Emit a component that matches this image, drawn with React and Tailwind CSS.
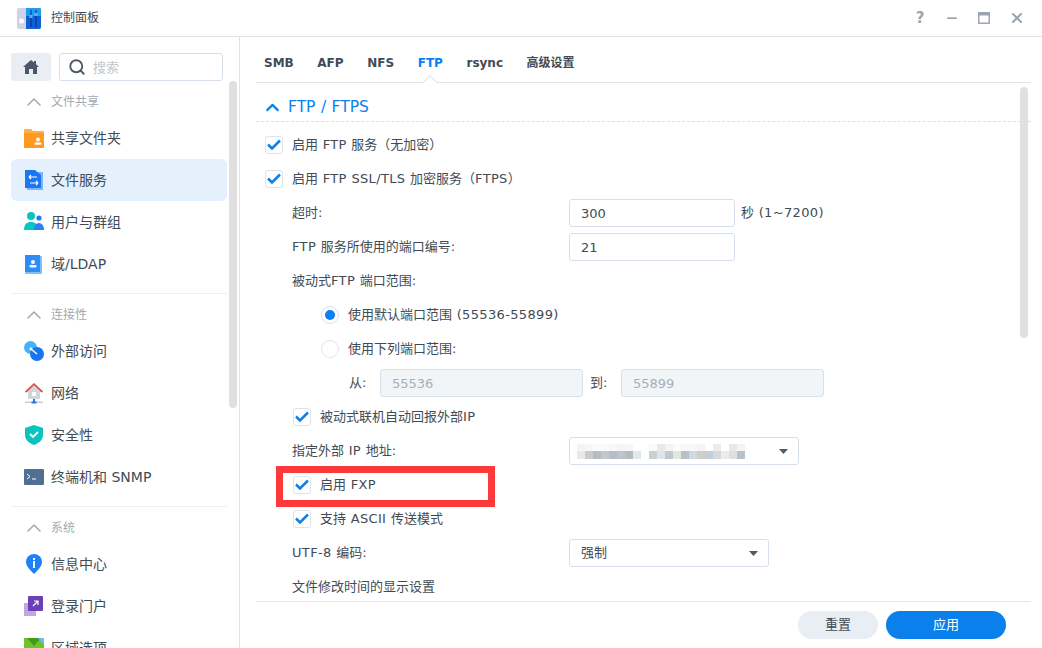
import React from "react";
import { ChevronUp, Search, X, Minus } from "lucide-react";

const HomeIcon = () => (
  <svg width="16" height="14" viewBox="0 0 16 14">
    <path d="M8 0l3 2.600V1h2v3.300L16 7h-2v7h-4V9H6v5H2V7H0z" fill="#4b5766" />
  </svg>
);

const FolderIcon = () => (
  <svg width="20" height="19" viewBox="0 0 20 19">
    <path d="M0 1a1 1 0 0 1 1-1h6l2 2h10a1 1 0 0 1 1 1v15a1 1 0 0 1-1 1H1a1 1 0 0 1-1-1z" fill="#fbb04a" />
    <path d="M0 4h20v14a1 1 0 0 1-1 1H1a1 1 0 0 1-1-1z" fill="#ff9a1f" />
    <circle cx="14" cy="10.500" r="2" fill="#fff" />
    <rect x="10.500" y="13.500" width="7" height="2.200" rx="1" fill="#fff" />
  </svg>
);

const FileServiceIcon = () => (
  <svg width="18" height="20" viewBox="0 0 18 20">
    <rect x="2" y="2" width="16" height="18" fill="#7db4ff" />
    <path d="M0 0h10l6 5v13H0z" fill="#1b76f2" />
    <path d="M4 7h8M4 7l2-2M4 7l2 2M13 13H5M13 13l-2-2M13 13l-2 2" stroke="#fff" strokeWidth="1.200" fill="none" />
  </svg>
);

const UsersIcon = () => (
  <svg width="20" height="20" viewBox="0 0 20 20">
    <circle cx="7" cy="4" r="4" fill="#07c4c4" />
    <path d="M0 18c0-6 3-8 7-8s7 2 7 8z" fill="#07c8c0" />
    <circle cx="15" cy="6" r="2.600" fill="#1f7cf5" />
    <path d="M10 18c0-4 2-7 5-7s5 3 5 7z" fill="#2a80f6" />
  </svg>
);

const DomainIcon = () => (
  <svg width="18" height="19" viewBox="0 0 18 19">
    <rect x="0" y="1" width="17" height="18" rx="1" fill="#7cc0fb" />
    <rect x="0" y="0" width="15" height="17" fill="#2d8df5" />
    <circle cx="8" cy="7" r="2" fill="#fff" />
    <rect x="4.500" y="10" width="7" height="2.400" rx="1" fill="#fff" />
  </svg>
);

const ExternalIcon = () => (
  <svg width="20" height="20" viewBox="0 0 20 20">
    <circle cx="6.500" cy="6.500" r="6.500" fill="#47b2fb" />
    <circle cx="13" cy="13" r="7" fill="#1c73ee" />
    <path d="M7 8l6 5" stroke="#fff" strokeWidth="1.400" />
    <circle cx="7" cy="8" r="1.400" fill="#fff" />
  </svg>
);

const NetworkIcon = () => (
  <svg width="18" height="21" viewBox="0 0 18 21">
    <path d="M9 1l8 8h-2v7H3V9H1z" fill="#d2d6db" />
    <path d="M0.500 9L9 1.200 17.500 9" fill="none" stroke="#d9534f" strokeWidth="1.800" />
    <rect x="7" y="9" width="4" height="4" fill="#fff" />
    <rect x="0" y="18.500" width="18" height="1.500" fill="#c9ced4" />
    <rect x="8" y="16" width="2" height="3" fill="#1f7cf5" />
    <rect x="6.500" y="18.500" width="5" height="2" fill="#1f7cf5" />
  </svg>
);

const ShieldIcon = () => (
  <svg width="18" height="20" viewBox="0 0 18 20">
    <path d="M9 0l9 3v7c0 5-4 8-9 10-5-2-9-5-9-10V3z" fill="#09c3bf" />
    <path d="M5 9l3 3 5-5" stroke="#fff" strokeWidth="1.800" fill="none" />
  </svg>
);

const TerminalIcon = () => (
  <svg width="20" height="16" viewBox="0 0 20 16">
    <rect width="20" height="16" rx="1" fill="#4f7093" />
    <path d="M3 5l3 2.500-3 2.500" stroke="#fff" strokeWidth="1" fill="none" />
    <path d="M8 10h4" stroke="#fff" strokeWidth="1" />
  </svg>
);

const InfoIcon = () => (
  <svg width="16" height="20" viewBox="0 0 16 20">
    <path d="M8 0a8 8 0 0 1 8 8c0 4-4 8-8 12-4-4-8-8-8-12a8 8 0 0 1 8-8z" fill="#1f80f8" />
    <rect x="7" y="7" width="2" height="7" fill="#fff" />
    <rect x="7" y="4" width="2" height="2" fill="#fff" />
  </svg>
);

const PortalIcon = () => (
  <svg width="20" height="20" viewBox="0 0 20 20">
    <rect x="0" y="7" width="12" height="13" fill="#c3a4ea" />
    <rect x="4" y="0" width="15" height="15" rx="1" fill="#6b3fb5" />
    <path d="M9 10l5-5M10 5h4v4" stroke="#fff" strokeWidth="1.200" fill="none" />
  </svg>
);

const RegionIcon = () => (
  <svg width="20" height="20" viewBox="0 0 20 20">
    <rect width="20" height="20" fill="#72c02c" />
    <path d="M10 8L3 0h14z" fill="#3f9a1e" />
    <path d="M14 0h6v7z" fill="#65c0f0" />
  </svg>
);

const sections = [
  {
    title: "文件共享",
    items: [
      { label: "共享文件夹", icon: <FolderIcon /> },
      { label: "文件服务", icon: <FileServiceIcon />, active: true },
      { label: "用户与群组", icon: <UsersIcon /> },
      { label: "域/LDAP", icon: <DomainIcon /> },
    ],
  },
  {
    title: "连接性",
    items: [
      { label: "外部访问", icon: <ExternalIcon /> },
      { label: "网络", icon: <NetworkIcon /> },
      { label: "安全性", icon: <ShieldIcon /> },
      { label: "终端机和 SNMP", icon: <TerminalIcon /> },
    ],
  },
  {
    title: "系统",
    items: [
      { label: "信息中心", icon: <InfoIcon /> },
      { label: "登录门户", icon: <PortalIcon /> },
      { label: "区域选项", icon: <RegionIcon /> },
    ],
  },
];

const tabs = ["SMB", "AFP", "NFS", "FTP", "rsync", "高级设置"];

// the blurred-out IP in the reference, two rows of mosaic cells
const blurTop = [
  "bg-[#f4f4f4]", "bg-[#f6f6f6]", "bg-[#fafafa]", "bg-[#fafafa]", "bg-[#f8f8fa]", "bg-[#f4f4f4]", "bg-[#f6f6f6]", "bg-white", "bg-white",
  "bg-[#fafafa]", "bg-[#e8e8ec]", "bg-[#f4f4f4]", "bg-[#fcfcfc]", "bg-[#f8f8f8]", "bg-[#f8f8f8]", "bg-[#f4f4f4]", "bg-white", "bg-[#ececec]", "bg-white", "bg-[#e8e8e8]", "bg-[#f4f4f4]",
];
const blurBottom = [
  "bg-[#e8e8e8]", "bg-[#c8ccd0]", "bg-[#b8bcc0]", "bg-[#c4c8c8]", "bg-[#b8bcc8]", "bg-[#c0c4c8]", "bg-[#b4bcc0]", "bg-[#e4e6e8]", "bg-white",
  "bg-[#c8d0d0]", "bg-[#e0e4e8]", "bg-[#c0c8d0]", "bg-[#e4e4e0]", "bg-[#b8c0c8]", "bg-[#d0d8e0]", "bg-[#cfcfc8]", "bg-[#c4d0d8]", "bg-[#d8d8d8]", "bg-[#e8ecf0]", "bg-[#e0e0e0]", "bg-[#b8c0c8]",
];

// latin runs sit a little wider than the CJK around them
const Txt = ({ children }) => (
  <span>
    {children.split(/([A-Za-z0-9/~().:-]+)/).map((part, i) =>
      i % 2 === 1 ? (
        <span key={i} className="tracking-[0.35px]">{part}</span>
      ) : (
        part
      )
    )}
  </span>
);

const Check = () => (
  <span className="flex h-[18px] w-[18px] shrink-0 items-center justify-center rounded-[3px] border border-[#dce5ee] bg-white">
    <svg width="14" height="12" viewBox="0 0 14 12">
      <path d="M1 5.500l4 4L13 1.500" stroke="#0a7ff0" strokeWidth="2.500" fill="none" />
    </svg>
  </span>
);

const Radio = ({ on }) => (
  <span className={`flex h-[18px] w-[18px] items-center justify-center rounded-full border ${on ? "border-[#cfe3f8]" : "border-[#dfe6ee]"}`}>
    {on && <span className="h-[10px] w-[10px] rounded-full bg-[#0a7ff0]" />}
  </span>
);

const Caret = () => (
  <svg width="9" height="5" viewBox="0 0 9 5" className="shrink-0">
    <path d="M0 0h9L4.500 5z" fill="#4d5a68" />
  </svg>
);

const Row = ({ children, className = "" }) => (
  <div className={`flex h-[34px] items-center ${className}`}>{children}</div>
);

const CheckRow = ({ label, indent }) => (
  <Row className={indent ? "pl-[37px]" : "pl-[9px]"}>
    <Check />
    <span className="ml-[9px]"><Txt>{label}</Txt></span>
  </Row>
);

const FieldRow = ({ label, children }) => (
  <Row className="pl-[36px]">
    <span className="w-[277px] shrink-0"><Txt>{label}</Txt></span>
    {children}
  </Row>
);

const TextBox = ({ value, className = "" }) => (
  <div className={`flex h-[28px] items-center rounded-[3px] border border-[#d7e0ea] px-[11px] pt-[1px] ${className}`}>{value}</div>
);

export default function App() {
  return (
    <div className="flex h-[648px] w-[1042px] flex-col overflow-hidden bg-white text-[13px] text-[#414b55] [font-family:'DejaVu_Sans','Noto_Sans_CJK_SC',sans-serif]">
      <div className="flex h-[37px] shrink-0 items-center border-b border-[#dde4ec] pl-[17px] pr-[17px]">
        <svg width="24" height="23" viewBox="0 0 24 23">
          <rect x="0" y="1" width="24" height="21" rx="2" fill="#cfd3e6" />
          <path d="M9 1h13a2 2 0 0 1 2 2v17a2 2 0 0 1-2 2H9z" fill="#0f5fd8" />
          <path d="M9 1h13a2 2 0 0 1 2 2v6H9z" fill="#1d9cf0" />
          <path d="M14 3v17M19 3v17" stroke="#0b2f78" strokeWidth="1" />
          <rect x="12.500" y="8" width="3" height="3" fill="#5cb4f5" />
          <rect x="17.500" y="6" width="3" height="3" fill="#5cb4f5" />
          <circle cx="4.500" cy="14" r="2.500" fill="#fff" />
        </svg>
        <span className="ml-[10px] text-[12px]">控制面板</span>
        <div className="ml-auto flex items-center gap-[18px] text-[#9aa5b1]">
          <span className="w-[14px] text-center text-[15px] font-bold leading-none">?</span>
          <Minus size={14} strokeWidth={3} />
          <svg width="14" height="12" viewBox="0 0 14 12">
            <rect x="1.750" y="0.750" width="10.500" height="10.500" fill="none" stroke="currentColor" strokeWidth="1.500" />
            <rect x="1" y="0" width="12" height="3.500" fill="currentColor" />
          </svg>
          <X size={16} strokeWidth={3} />
        </div>
      </div>

      <div className="flex min-h-0 flex-1">
        <aside className="relative w-[240px] shrink-0 overflow-hidden border-r border-[#dde4ec]">
          <div className="flex items-center gap-[8px] pl-[11px] pt-[16px]">
            <div className="flex h-[28px] w-[40px] items-center justify-center rounded-[3px] bg-[#e9eef4]">
              <HomeIcon />
            </div>
            <div className="flex h-[28px] w-[164px] items-center rounded-[3px] border border-[#d7e0ea] pl-[8px]">
              <Search size={18} strokeWidth={2.5} className="text-[#4d5a68]" />
              <span className="ml-[7px] pt-[1px] text-[#c2c7cd]">搜索</span>
            </div>
          </div>
          {sections.map((s, i) => (
            <div key={s.title} className={i > 0 ? "mx-[11px] mt-[8px] w-[216px] border-t border-[#eceef2]" : "mx-[11px] w-[216px]"}>
              <div className={`flex h-[36px] items-center pl-[11px] text-[12px] text-[#a3a9b0] ${i > 0 ? "pt-[5px]" : "pt-[6px]"}`}>
                <ChevronUp size={24} strokeWidth={1.500} className="text-[#a3a9b0]" />
                <span className="ml-[5px]">{s.title}</span>
              </div>
              {s.items.map((item) => (
                <div key={item.label} className={`flex h-[42px] items-center rounded-[6px] text-[14px] ${item.active ? "bg-[#e4f0fb]" : ""}`}>
                  <span className="flex w-[40px] shrink-0 justify-center pl-[6px]">{item.icon}</span>
                  <span>{item.label}</span>
                </div>
              ))}
            </div>
          ))}
          <div className="absolute left-[229px] top-[44px] h-[327px] w-[8px] rounded-full bg-[#e0e0e0]" />
        </aside>

        <main className="relative flex min-w-0 flex-1 flex-col pl-[16px] [word-spacing:0.5px]">
          <div className="relative mr-[11px] flex h-[46px] shrink-0 items-center gap-[23.6px] border-b border-[#dde4ec] pl-[8px] pt-[7px] text-[12px] font-bold">
            {tabs.map((t) => (
              <span key={t} className={t === "FTP" ? "text-[#0a7ff0]" : ""}>{t}</span>
            ))}
            <span className="absolute left-[169px] top-[40px] h-[10px] w-[10px] rotate-45 border-l border-t border-[#dde4ec] bg-white" />
          </div>

          <div className="mr-[11px] flex h-[39px] shrink-0 items-center border-b border-dashed border-[#d7e0ea] pl-[6px] pt-[11px] text-[15.5px] text-[#0a7ff0]">
            <ChevronUp size={21} strokeWidth={2.5} />
            <span className="ml-[5px]">FTP / FTPS</span>
          </div>

          <div className="relative min-h-0 flex-1 overflow-hidden pt-[6px]">
            <CheckRow label="启用 FTP 服务（无加密）" />
            <CheckRow label="启用 FTP SSL/TLS 加密服务（FTPS）" />
            <FieldRow label="超时:">
              <TextBox value="300" className="w-[166px]" />
              <span className="ml-[6px]"><Txt>秒 (1~7200)</Txt></span>
            </FieldRow>
            <FieldRow label="FTP 服务所使用的端口编号:">
              <TextBox value="21" className="w-[166px]" />
            </FieldRow>
            <FieldRow label="被动式FTP 端口范围:" />
            <Row className="pl-[65px]">
              <Radio on />
              <span className="ml-[9px]"><Txt>使用默认端口范围 (55536-55899)</Txt></span>
            </Row>
            <Row className="pl-[65px]">
              <Radio />
              <span className="ml-[9px]">使用下列端口范围:</span>
            </Row>
            <Row className="pl-[93px]">
              <span className="w-[31px] shrink-0">从:</span>
              <TextBox value="55536" className="w-[203px] border-[#d9e1e8] bg-[#f2f5f7] text-[#a7afb7]" />
              <span className="w-[38px] shrink-0 pl-[7px]">到:</span>
              <TextBox value="55899" className="w-[203px] border-[#d9e1e8] bg-[#f2f5f7] text-[#a7afb7]" />
            </Row>
            <CheckRow label="被动式联机自动回报外部IP" indent />
            <FieldRow label="指定外部 IP 地址:">
              <div className="flex h-[28px] w-[230px] items-center rounded-[3px] border border-[#d7e0ea] pl-[7px] pr-[10px]">
                <div className="flex flex-col">
                  <div className="flex">
                    {blurTop.map((c, i) => (
                      <span key={i} className={`h-[7px] w-[8px] ${c}`} />
                    ))}
                  </div>
                  <div className="flex">
                    {blurBottom.map((c, i) => (
                      <span key={i} className={`h-[8px] w-[8px] ${c}`} />
                    ))}
                  </div>
                </div>
                <span className="ml-auto flex"><Caret /></span>
              </div>
            </FieldRow>
            <CheckRow label="启用 FXP" indent />
            <CheckRow label="支持 ASCII 传送模式" indent />
            <FieldRow label="UTF-8 编码:">
              <div className="flex h-[28px] w-[200px] items-center rounded-[3px] border border-[#d7e0ea] pl-[11px] pr-[10px]">
                <span>强制</span>
                <span className="ml-auto flex"><Caret /></span>
              </div>
            </FieldRow>
            <FieldRow label="文件修改时间的显示设置" />
            <div className="absolute left-[20px] top-[344px] h-[41px] w-[219px] border-[7px] border-[#fc3a3a]" />
          </div>

          <div className="mr-[11px] flex h-[47px] shrink-0 items-start justify-end gap-[8px] border-t border-[#e5e7ea] pr-[25px] pt-[9px]">
            <button className="h-[28px] w-[80px] rounded-full bg-[#e9eef4]">重置</button>
            <button className="h-[28px] w-[120px] rounded-full bg-[#0a80ec] text-white">应用</button>
          </div>

          <div className="absolute left-[780px] top-[50px] h-[251px] w-[8px] rounded-full bg-[#e0e0e0]" />
        </main>
      </div>
    </div>
  );
}
